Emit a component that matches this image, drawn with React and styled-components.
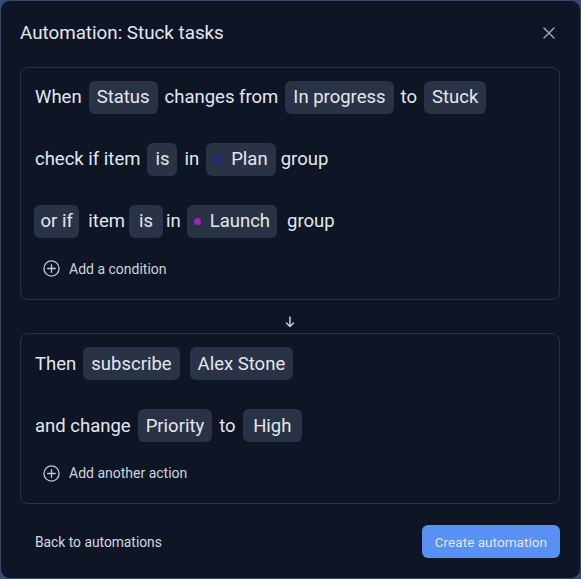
import React from "react";
import styled, { createGlobalStyle } from "styled-components";

const GlobalStyle = createGlobalStyle`
  html, body {
    margin: 0;
    padding: 0;
    background: #2d4c7c;
  }
  body {
    font-family: Roboto, "Liberation Sans", sans-serif;
    -webkit-font-smoothing: antialiased;
  }
`;

const Modal = styled.div`
  box-sizing: border-box;
  width: 581px;
  height: 579px;
  background: #0e1525;
  border: 1px solid #3a4a66;
  border-radius: 10px;
  padding: 19px 20px 20px 19px;
  display: flex;
  flex-direction: column;
  color: #e3e7ee;
`;

const Header = styled.div`
  display: flex;
  align-items: center;
  justify-content: space-between;
  height: 26px;
  margin-bottom: 21px;
`;

const Title = styled.h2`
  margin: 0;
  font-size: 18.8px;
  font-weight: 400;
  color: #e4e7ed;
`;

const CloseButton = styled.button`
  background: none;
  border: none;
  padding: 0;
  margin-right: 4px;
  width: 14px;
  height: 14px;
  display: flex;
  cursor: pointer;
  svg {
    stroke: #9aa3b4;
  }
`;

const Box = styled.div`
  border: 1px solid #283246;
  border-radius: 8px;
  padding: 13px 14px 20px 14px;
  display: flex;
  flex-direction: column;
  gap: 29px;
`;

const Row = styled.div`
  display: flex;
  align-items: center;
  height: 33px;
  gap: 7px;
  font-size: 18.5px;
`;

const Word = styled.span`
  color: #e3e7ee;
  margin-left: ${(p) => p.$ml || 0}px;
`;

const Chip = styled.span`
  display: inline-flex;
  align-items: center;
  height: 33px;
  padding: 0 ${(p) => p.$px ?? 8}px;
  border-radius: 6px;
  background: #2a3245;
  color: #e3e7ee;
  margin-left: ${(p) => p.$ml || 0}px;
`;

const Dot = styled.span`
  width: 7px;
  height: 7px;
  border-radius: 50%;
  background: ${(p) => p.$color};
  margin-right: ${(p) => p.$gap || 10}px;
`;

const AddRow = styled.button`
  display: flex;
  align-items: center;
  gap: 9px;
  height: 20px;
  margin-top: -8px;
  padding: 0 0 0 8px;
  background: none;
  border: none;
  font-family: inherit;
  font-size: 14px;
  color: #cfd4dc;
  cursor: pointer;
  svg {
    stroke: #c3c9d3;
  }
`;

const ArrowRow = styled.div`
  height: 34px;
  display: flex;
  justify-content: center;
  align-items: flex-end;
  padding-bottom: 5px;
  box-sizing: border-box;
  svg {
    stroke: #c9ced8;
  }
`;

const Footer = styled.div`
  margin-top: 21px;
  display: flex;
  align-items: center;
  justify-content: space-between;
  padding-left: 15px;
`;

const LinkButton = styled.button`
  background: none;
  border: none;
  padding: 0;
  font-family: inherit;
  font-size: 13.8px;
  color: #d4d9e1;
  cursor: pointer;
`;

const PrimaryButton = styled.button`
  height: 33px;
  padding: 0 13px;
  border: none;
  border-radius: 6px;
  background: #5890f3;
  color: #dfe9fc;
  font-family: inherit;
  font-size: 13.6px;
  cursor: pointer;
`;

const PlusCircle = () => (
  <svg width="17" height="17" viewBox="0 0 18 18" fill="none" strokeWidth="1.4">
    <circle cx="9" cy="9" r="8" />
    <path d="M9 5v8M5 9h8" strokeLinecap="round" />
  </svg>
);

const AddButton = ({ children }) => (
  <AddRow type="button">
    <PlusCircle />
    <span>{children}</span>
  </AddRow>
);

export default function App() {
  return (
    <>
      <GlobalStyle />
      <Modal>
        <Header>
          <Title>Automation: Stuck tasks</Title>
          <CloseButton type="button" aria-label="Close">
            <svg width="14" height="14" viewBox="0 0 14 14" fill="none" strokeWidth="1.5" strokeLinecap="round">
              <path d="M2 2l10 10M12 2L2 12" />
            </svg>
          </CloseButton>
        </Header>

        <Box>
          <Row>
            <Word>When</Word>
            <Chip>Status</Chip>
            <Word>changes from</Word>
            <Chip>In progress</Chip>
            <Word>to</Word>
            <Chip>Stuck</Chip>
          </Row>
          <Row>
            <Word>check if item</Word>
            <Chip>is</Chip>
            <Word>in</Word>
            <Chip>
              <Dot $color="#1f2a86" />
              Plan
            </Chip>
            <Word $ml={-2}>group</Word>
          </Row>
          <Row>
            <Chip $ml={-1} $px={6.5}>or if</Chip>
            <Word $ml={2}>item</Word>
            <Chip $ml={-3} $px={10}>is</Chip>
            <Word $ml={-4}>in</Word>
            <Chip $ml={-1} $px={7}>
              <Dot $color="#9a26b8" $gap={9} />
              Launch
            </Chip>
            <Word $ml={3}>group</Word>
          </Row>
          <AddButton>Add a condition</AddButton>
        </Box>

        <ArrowRow>
          <svg width="12" height="12" viewBox="0 0 12 12" fill="none" strokeWidth="1.5" strokeLinecap="round" strokeLinejoin="round">
            <path d="M6 1v9.5M2.5 7L6 10.5 9.5 7" />
          </svg>
        </ArrowRow>

        <Box>
          <Row>
            <Word>Then</Word>
            <Chip>subscribe</Chip>
            <Chip $ml={3}>Alex Stone</Chip>
          </Row>
          <Row>
            <Word>and change</Word>
            <Chip>Priority</Chip>
            <Word>to</Word>
            <Chip $px={10.5}>High</Chip>
          </Row>
          <AddButton>Add another action</AddButton>
        </Box>

        <Footer>
          <LinkButton type="button">Back to automations</LinkButton>
          <PrimaryButton type="button">Create automation</PrimaryButton>
        </Footer>
      </Modal>
    </>
  );
}
